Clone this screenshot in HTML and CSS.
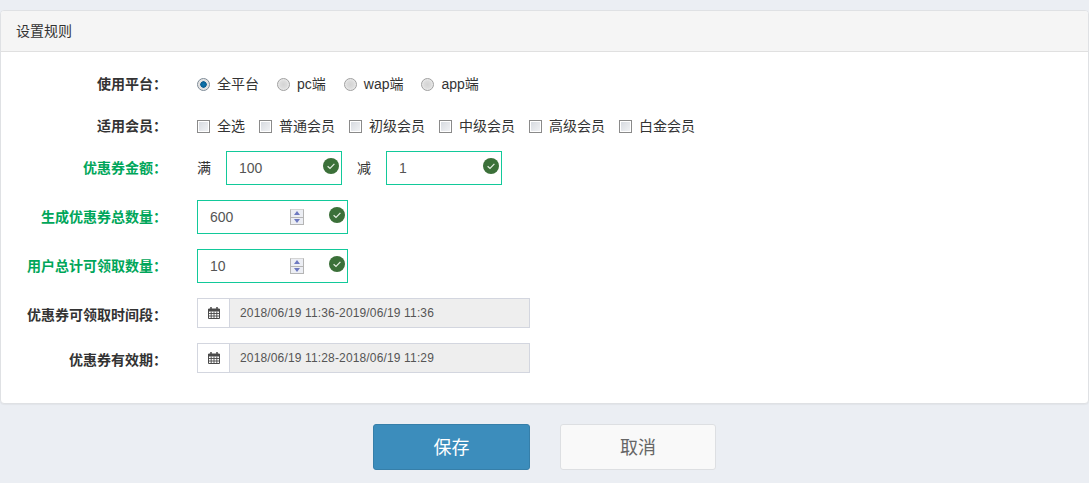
FILE: index.html
```html
<!DOCTYPE html>
<html lang="zh-CN">
<head>
<meta charset="utf-8">
<title>设置规则</title>
<link rel="stylesheet" href="styles.css">
</head>
<body>
<section class="panel">
  <header class="panel-head">设置规则</header>
  <form class="form">
    <div class="row row-choice">
      <label class="label">使用平台<span class="colon">：</span></label>
      <div class="choices choices-radio">
        <label class="choice"><input type="radio" name="p" checked><span>全平台</span></label>
        <label class="choice"><input type="radio" name="p"><span>pc端</span></label>
        <label class="choice"><input type="radio" name="p"><span>wap端</span></label>
        <label class="choice"><input type="radio" name="p"><span>app端</span></label>
      </div>
    </div>
    <div class="row row-choice row-tight">
      <label class="label">适用会员<span class="colon">：</span></label>
      <div class="choices choices-check">
        <label class="choice"><input type="checkbox"><span>全选</span></label>
        <label class="choice"><input type="checkbox"><span>普通会员</span></label>
        <label class="choice"><input type="checkbox"><span>初级会员</span></label>
        <label class="choice"><input type="checkbox"><span>中级会员</span></label>
        <label class="choice"><input type="checkbox"><span>高级会员</span></label>
        <label class="choice"><input type="checkbox"><span>白金会员</span></label>
      </div>
    </div>
    <div class="row row-input">
      <label class="label ok">优惠券金额<span class="colon">：</span></label>
      <div class="pair">
        <span class="affix">满</span>
        <div class="field field-small">
          <span class="value">100</span>
          <svg class="check" viewBox="0 0 16 16"><circle cx="8" cy="8" r="8" fill="#3b7039"/><path d="M4.6 8.2 7 10.5 11.4 5.8" fill="none" stroke="#e6efe4" stroke-width="1.2"/></svg>
        </div>
        <span class="affix affix-gap">减</span>
        <div class="field field-small">
          <span class="value">1</span>
          <svg class="check" viewBox="0 0 16 16"><circle cx="8" cy="8" r="8" fill="#3b7039"/><path d="M4.6 8.2 7 10.5 11.4 5.8" fill="none" stroke="#e6efe4" stroke-width="1.2"/></svg>
        </div>
      </div>
    </div>
    <div class="row row-input">
      <label class="label ok">生成优惠券总数量<span class="colon">：</span></label>
      <div class="field field-num">
        <span class="value">600</span>
        <span class="spin"><i class="up"></i><i class="down"></i></span>
        <svg class="check" viewBox="0 0 16 16"><circle cx="8" cy="8" r="8" fill="#3b7039"/><path d="M4.6 8.2 7 10.5 11.4 5.8" fill="none" stroke="#e6efe4" stroke-width="1.2"/></svg>
      </div>
    </div>
    <div class="row row-input">
      <label class="label ok">用户总计可领取数量<span class="colon">：</span></label>
      <div class="field field-num">
        <span class="value">10</span>
        <span class="spin"><i class="up"></i><i class="down"></i></span>
        <svg class="check" viewBox="0 0 16 16"><circle cx="8" cy="8" r="8" fill="#3b7039"/><path d="M4.6 8.2 7 10.5 11.4 5.8" fill="none" stroke="#e6efe4" stroke-width="1.2"/></svg>
      </div>
    </div>
    <div class="row row-date">
      <label class="label">优惠券可领取时间段<span class="colon">：</span></label>
      <div class="date">
        <span class="date-icon"><svg viewBox="0 0 12 12" width="12" height="12"><path d="M.5 2h11v9.5H.5z" fill="none" stroke="#4a4a4a"/><path d="M.5 2h11v2.5H.5z" fill="#4a4a4a"/><path d="M3 0v2.5M9 0v2.5" stroke="#4a4a4a" stroke-width="1.5"/><path d="M.5 6.5h11M.5 9h11M3.2 4.5v7M6 4.5v7M8.8 4.5v7" stroke="#4a4a4a" stroke-width=".9"/></svg></span>
        <span class="date-value">2018/06/19 11:36-2019/06/19 11:36</span>
      </div>
    </div>
    <div class="row row-date row-last">
      <label class="label">优惠券有效期<span class="colon">：</span></label>
      <div class="date">
        <span class="date-icon"><svg viewBox="0 0 12 12" width="12" height="12"><path d="M.5 2h11v9.5H.5z" fill="none" stroke="#4a4a4a"/><path d="M.5 2h11v2.5H.5z" fill="#4a4a4a"/><path d="M3 0v2.5M9 0v2.5" stroke="#4a4a4a" stroke-width="1.5"/><path d="M.5 6.5h11M.5 9h11M3.2 4.5v7M6 4.5v7M8.8 4.5v7" stroke="#4a4a4a" stroke-width=".9"/></svg></span>
        <span class="date-value">2018/06/19 11:28-2018/06/19 11:29</span>
      </div>
    </div>
  </form>
</section>
<div class="actions">
  <button type="button" class="btn btn-primary">保存</button>
  <button type="button" class="btn btn-default">取消</button>
</div>
</body>
</html>
```
FILE: styles.css
```css
* { box-sizing: border-box; }
html, body { height: 100%; }
body {
  margin: 0;
  padding-top: 10px;
  background: #ebeef3;
  color: #333;
  font: 14px/18px "Liberation Sans", "Noto Sans CJK SC", sans-serif;
  overflow: hidden;
}
.panel {
  background: #fff;
  border: 1px solid #dfe1e4;
  border-radius: 4px;
  box-shadow: 0 1px 1px rgba(0,0,0,.04);
}
.panel-head {
  height: 41px;
  padding: 0 15px;
  line-height: 41px;
  background: #f5f5f5;
  border-bottom: 1px solid #e0e0e0;
  border-radius: 3px 3px 0 0;
  color: #333;
}
.form { padding: 19px 0 30px; }
.row { display: flex; align-items: center; margin-bottom: 15px; }
.row-last { margin-bottom: 0; }
.row-tight { margin-bottom: 11px; }
.row-choice { height: 27px; }
.row-input { height: 34px; }
.row-date { height: 30px; }
.label {
  flex: none;
  width: 166px;
  text-align: right;
  font-weight: 700;
  color: #333;
  white-space: nowrap;
}
.label.ok { color: #00a65a; }
.row-date .label { padding-top: 2px; }
.row-choice .label, .row-input .label { padding-bottom: 2px; }
.colon { font-family: "Noto Sans CJK TC", sans-serif; }
.choices, .pair { display: flex; align-items: center; margin-left: 30px; }
.row > .field, .row > .date { margin-left: 30px; }
.choice { display: flex; align-items: center; white-space: nowrap; }
.choice span { padding-bottom: 2px; }
.choices-radio { gap: 18px; }
.choices-check { gap: 14px; }
.choice input { appearance: none; -webkit-appearance: none; margin: 0 7px 0 0; flex: none; }
input[type=radio] {
  width: 13px;
  height: 13px;
  border: 1px solid #a0a0a0;
  border-radius: 50%;
  background: radial-gradient(circle at 50% 50%, #d4d4d4 0, #dcdcdc 45%, #f8f8f8 100%);
}
input[type=radio]:checked {
  background: radial-gradient(circle at 50% 50%, #0c78b4 0, #0d5f92 38%, #dedede 45%, #f6f6f6 100%);
  border-color: #7d8a96;
}
input[type=checkbox] {
  width: 13px;
  height: 13px;
  border: 1px solid #8a8a8a;
  background: linear-gradient(135deg, #d4d8de 0, #f3f4f6 100%);
  box-shadow: inset 0 0 0 1px #fff;
}
.affix { flex: none; width: 29px; }
.affix-gap { margin-left: 15px; }
.field {
  position: relative;
  flex: none;
  height: 34px;
  border: 1px solid #12c99a;
  padding-left: 12px;
  line-height: 32px;
  font-size: 14px;
  color: #555;
  background: #fff;
}
.field-small { width: 116px; }
.field-num { width: 151px; }
.check { position: absolute; right: 2px; top: 6px; width: 16px; height: 16px; }
.spin {
  position: absolute;
  left: 92px;
  top: 8px;
  width: 14px;
  height: 16px;
  display: flex;
  flex-direction: column;
  background: #eceef4;
  border: 1px solid #b5b5b5;
  border-top-color: #d4d4d4;
}
.spin i { flex: 1; display: flex; align-items: center; justify-content: center; }
.spin .up { border-bottom: 1px solid #b5b5b5; }
.spin .up::before { content: ""; border: 3.5px solid transparent; border-top: 0; border-bottom: 4px solid #6d79c0; }
.spin .down::before { content: ""; border: 3.5px solid transparent; border-bottom: 0; border-top: 4px solid #6d79c0; }
.date { display: flex; flex: none; width: 333px; height: 30px; font-size: 12px; line-height: 28px; color: #555; }
.date-icon {
  flex: none;
  display: flex;
  align-items: center;
  justify-content: center;
  width: 32px;
  padding: 0 0 1px 1px;
  background: #fff;
  border: 1px solid #d3d6df;
  border-right: 0;
}
.date-value {
  flex: 1;
  padding-left: 10px;
  letter-spacing: .15px;
  background: #eee;
  border: 1px solid #d3d6df;
}
.actions { display: flex; justify-content: center; gap: 30px; margin-top: 20px; }
.btn {
  width: 157px;
  height: 46px;
  border-radius: 3px;
  font: 18px/1 "Liberation Sans", "Noto Sans CJK SC", sans-serif;
  padding: 1px 0 0;
}
.btn-primary { background: #3c8dbc; border: 1px solid #367fa9; color: #fff; }
.btn-default { width: 156px; background: #f9f9f9; border: 1px solid #dddfe2; color: #666; }
```
